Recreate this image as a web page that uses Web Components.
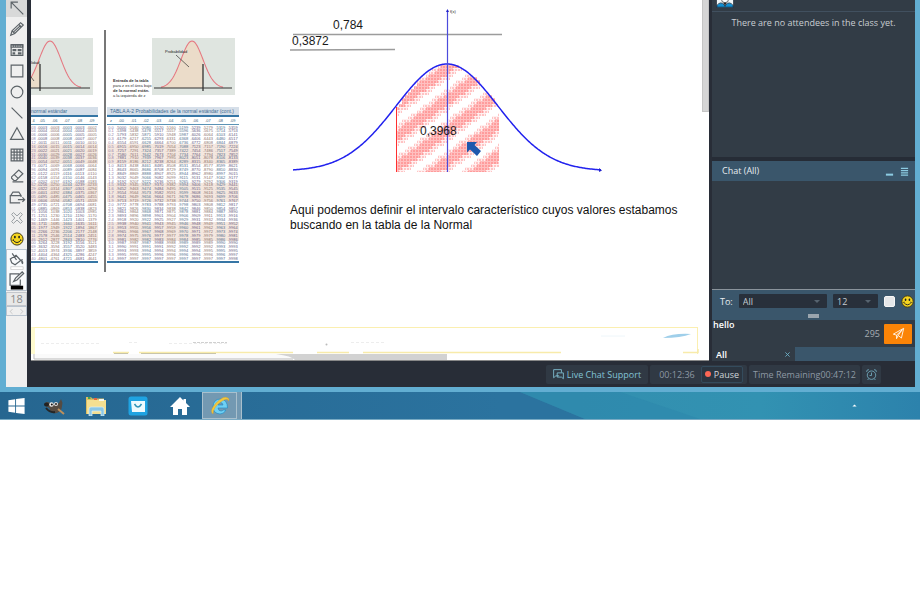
<!DOCTYPE html>
<html lang="es">
<head>
<meta charset="utf-8">
<title>Clase virtual</title>
<style>
html,body{margin:0;background:#fff}
body{font-family:"Open Sans","Noto Sans",sans-serif;font-size:11px}
</style>
</head>
<body>
<class-desktop></class-desktop>
<script>
const define=(name,html,setup)=>{
  const t=document.createElement('template');t.innerHTML=html;
  customElements.define(name,class extends HTMLElement{
    constructor(){super();this.attachShadow({mode:'open'}).append(t.content.cloneNode(true));}
    connectedCallback(){if(setup&&!this.ready){this.ready=true;setup.call(this,this.shadowRoot);}}
  });
};
const smiley='<circle cx="10" cy="10" r="8.7" fill="#f6d51f" stroke="#3d3510" stroke-width="1.4"/><ellipse cx="7" cy="7.3" rx="1.3" ry="2" fill="#222"/><ellipse cx="13" cy="7.3" rx="1.3" ry="2" fill="#222"/><path d="M4.3 11.3q5.7 7.6 11.4 0M3.6 11.8l1.6-1M16.4 11.8l-1.6-1" fill="none" stroke="#222" stroke-width="1.4"/>';
const S='fill="none" stroke="currentColor" stroke-width="1.3"';
const ICONS={
 arrow:`<path d="M17 17L4 4M3.5 10.500V3.500H11" ${S}/>`,
 pencil:`<path d="M3 17l1.500-5L14 3l3 2.500-9.500 9.500zM12 5l3 2.800M4.500 12l3 3M6 13.500l8-7.500" ${S}/>`,
 panel:`<path d="M3.500 4h13v12h-13z" ${S}/><path d="M3 4h14v3.500H3zM5 9h4.300v2.500H5zM10.700 9H15v2.500h-4.300zM5 12.500h3V15H5zM11 12.500h4V15h-4z" fill="currentColor"/><path d="M4 5.700h12" stroke="#eee" stroke-width=".8" stroke-dasharray="1.500 1"/>`,
 square:`<path d="M3.500 3.500h13v13h-13z" ${S}/>`,
 circle:`<circle cx="10" cy="10" r="6.500" ${S}/>`,
 line:`<path d="M4 4l12 12" ${S}/>`,
 triangle:`<path d="M10 3l7.200 13H2.800z" ${S}/>`,
 grid:`<path d="M3.500 3.500h13v13h-13zM6.800 3.500v13M10 3.500v13M13.300 3.500v13M3.500 6.800h13M3.500 10h13M3.500 13.300h13" ${S}/>`,
 eraser:`<path d="M4 11l8-7.500 4.500 4L9 15H6.500L4 12.500zM7 8.500l4.500 4.500M5 16.500h12" ${S}/>`,
 shape:`<path d="M14.500 10V8.500h-12v8h11M3 8.500l2.500-4h6.500l2.500 4M11 13h7.500M16 10.500l2.500 2.500L16 15.500" ${S}/>`,
 cross:`<path d="M4 6l2-2 4 3.700L14 4l2 2-3.500 4 3.500 4-2 2-4-3.700L6 16l-2-2 3.500-4z" fill="none" stroke="#9aa0a4" stroke-width="1.100"/>`,
 smiley,
 bucket:`<path d="M3.500 8.500l6-4 5 5.500-6 4.500-3.500-2zM5.500 2.500l4.500 7M14.500 10l2-1" ${S}/><path d="M15 9q3.500 3 1.500 5-2-.500-1.500-5" fill="currentColor"/><path d="M4 16.500h13v3H4z" fill="#fff" stroke="#bbb" stroke-width=".6"/>`,
 penbox:`<path d="M13 3H3.200v12H14V9M7 11l2-3.500L16 1l1.500 1.500-7 7z" ${S}/><path d="M4 15.500h13v4H4z" fill="#000"/>`,
 prev:`<path d="M13 3L6 10l7 7" ${S}/>`,
 next:`<path d="M7 3l7 7-7 7" ${S}/>`,
 send:`<path d="M2 11L18 2l-3.500 15-5-4L16 4l-9 8.500M2 11l5 1.500V18l2.500-5" fill="none" stroke="#fff" stroke-width="1.300"/>`,
 chat:`<path d="M11 12H6l-3.500 3V2.500h12V7M8 7.500h9.500v9L14.500 14H8z" ${S}/>`,
 clock:`<circle cx="10" cy="11" r="6.500" ${S}/><path d="M10 7V11.500H7M2.500 6Q2 2.500 6 2.500M17.500 6Q18 2.500 14 2.500M6 16L4 18.500M14 16l2 2.500" ${S}/>`,
 start:`<path d="M1 3.500l7.500-1v7H1zM9.500 2.300L19 1v8.500H9.500zM1 10.500h7.500v7l-7.500-1zM9.500 10.500H19V19l-9.500-1.300z" fill="#fff"/>`,
 gimp:`<path d="M1 7q2-2 5 0 6 2 9 0l2-4 1.500 4-1 6q-3 5-8 4-4-1-4-5L1 10z" fill="#554b42"/><path d="M14 13l6 5" stroke="#bb8f5c" stroke-width="2"/><path d="M2 12q4 5 9 4" stroke="#252525" stroke-width="2" fill="none"/><circle cx="7.500" cy="8.500" r="2.200" fill="#eee"/><circle cx="12" cy="8" r="2" fill="#ddd"/><circle cx="7.800" cy="8.500" r="1" fill="#111"/><circle cx="12" cy="8" r=".9" fill="#111"/><ellipse cx="2.500" cy="8.500" rx="2.500" ry="2" fill="#222"/>`,
 folder:`<path d="M0 1h5l1 1.500h12V18H0z" fill="#dcbd62"/><path d="M1 4h19v14H1z" fill="#f4df91"/><path d="M2 1h2.500v2H2z" fill="#43a651"/><path d="M8 2h3v2H8z" fill="#e06544"/><path d="M13 3h5v2h-5z" fill="#f7f7ef"/><path d="M3 20v-7q0-2 2-2h11q2 0 2 2v7h-3v-5H6v5z" fill="#8bc7e6" stroke="#d9f0fa" stroke-width=".7"/>`,
 store:`<rect x=".5" y=".5" width="19" height="19" rx="2.500" fill="#1fa3e2"/><path d="M3 5h14v11H4z" fill="#eefafe"/><path d="M6.500 8q3.500 6 7 0" fill="none" stroke="#3193b7" stroke-width="1.500"/>`,
 home:`<path d="M10 1l3.500 3.500V3H16v4l4 4h-3v8h-5v-6H8v6H3v-8H0z" fill="#fff"/>`,
 ie:`<path d="M16 14q-2 4-6 4-7-.500-7-7.500Q3.500 3 10.500 3q7 .500 7 9H8q.500 3 3 3 1.500 0 2-1zM8 9h5q-.500-2.500-2.500-2.500T8 9z" fill="#6fd0f4" stroke="#248dc4" stroke-width=".7"/><path d="M3 18Q-1 15 6 7q8-8 12-5 1.500 1 .500 3Q18 1.500 12 5 3 11 3 18" fill="#f3c83d" stroke="#d69f22" stroke-width=".4"/>`,
 people:`<path d="M1 0h18v18H1z" fill="#f2f6f8"/><circle cx="10" cy="9" r="4" fill="#fff" stroke="#333" stroke-width=".8"/><path d="M1 18v-2q4-5 8-1l1 2 1-2q4-4 8 1v2z" fill="#148fd1" stroke="#123" stroke-width=".8"/><path d="M8 13l2 3 2-3z" fill="#222"/>`,
 menu:`<path d="M2 3h16M2 8h16M2 13h16M2 18h16" stroke="#8ccbe2" stroke-width="2.600"/>`,
 minus:`<path d="M2 17h16" stroke="#8ccbe2" stroke-width="4.500"/>`,
 close:`<path d="M4 4l12 12M16 4L4 16" stroke="#6fb2c8" stroke-width="2.500"/>`,
 up:`<path d="M4 13l6-6 6 6z" fill="#fff"/>`
};
define('ui-icon','<style>:host{display:block;width:20px;height:20px;flex:none}svg{display:block;width:100%;height:100%}</style>',function(r){
  r.append(document.createRange().createContextualFragment(`<svg viewBox="0 0 20 20" aria-hidden="true">${ICONS[this.getAttribute('name')]}</svg>`));
});

define('tool-bar',`<style>
:host{display:flex;flex-direction:column;background:#efefef;color:#5c6368;width:21px;overflow:hidden}
button{border:0;padding:0;background:none;color:inherit;height:21px;display:flex;align-items:center;justify-content:center;font:inherit}
.on{height:17px;align-items:flex-end;background:#d8d9d9;margin-bottom:1px}
ui-icon{width:18px;height:18px}.s{width:14px;height:14px}
.fill{border:1px solid #b9c3ce;background:#f8fafc}.fill button{height:20px}.fill ui-icon{width:19px;height:19px}
output{border:1px solid #c4c7cc;margin-top:1px;height:12px;line-height:12px;text-align:center;font-size:11px;color:#8b8b8b;background:#e8e8e8}
.step{display:flex;border:1px solid #b9c3ce}.step button{flex:1;height:8px;color:#999}.step ui-icon{width:7px;height:7px}
</style>
<button class="on" aria-label="Select"><ui-icon name="arrow"></ui-icon></button>
<button aria-label="Pencil"><ui-icon name="pencil"></ui-icon></button>
<button aria-label="Panel"><ui-icon name="panel"></ui-icon></button>
<button aria-label="Square"><ui-icon name="square"></ui-icon></button>
<button aria-label="Circle"><ui-icon name="circle"></ui-icon></button>
<button aria-label="Line"><ui-icon name="line"></ui-icon></button>
<button aria-label="Triangle"><ui-icon name="triangle"></ui-icon></button>
<button aria-label="Grid"><ui-icon name="grid"></ui-icon></button>
<button aria-label="Eraser"><ui-icon name="eraser"></ui-icon></button>
<button aria-label="Shapes"><ui-icon name="shape"></ui-icon></button>
<button aria-label="Clear"><ui-icon name="cross"></ui-icon></button>
<button aria-label="Emoji"><ui-icon class="s" name="smiley"></ui-icon></button>
<div class="fill"><button aria-label="Fill"><ui-icon name="bucket"></ui-icon></button><button aria-label="Stroke"><ui-icon name="penbox"></ui-icon></button></div>
<output>18</output>
<div class="step"><button aria-label="Smaller"><ui-icon name="prev"></ui-icon></button><button aria-label="Larger"><ui-icon name="next"></ui-icon></button></div>`);

/* Cumulative standard normal distribution (Zelen & Severo). */
const phi=z=>{const a=Math.abs(z),t=1/(1+.2316419*a),p=Math.exp(-a*a/2)/2.50662827*t*(.31938153+t*(-.356563782+t*(1.781477937+t*(-1.821255978+t*1.330274429))));return z<0?p:1-p};
define('normal-table',`<style>
:host{display:block;width:132px;font:4px "Liberation Sans",sans-serif}
:host([part-one]){width:67px}
table{width:100%;border-collapse:collapse;table-layout:fixed;height:146px;border-bottom:2px solid #3676a5}
caption{background:#d6dfe9;color:#3c6b92;height:8px;line-height:8px;font-size:5px;text-align:left;padding-left:3px;border-bottom:2px solid #3676a5;white-space:nowrap}
:host([part-one]) caption{padding-left:0}
td,th{padding:0;font-weight:400;line-height:3px;text-align:center;white-space:nowrap}
thead th{height:7px;border-bottom:1px solid #5b93b5;color:#3c5f7c}
th:first-child{width:8px}:host([part-one]) th:first-child{width:5px}
tbody th{color:#927ba8}
td:nth-child(3n){color:#8a6f6a}td:nth-child(3n+1){color:#4f6d8c}td:nth-child(3n+2){color:#64597e}
tr.b{background:#f4e7df}
</style><table><caption></caption><thead><tr></tr></thead><tbody></tbody></table>`,function(r){
  /* Part one starts at column .05; its narrow first column holds two digits only. */
  const neg=this.hasAttribute('part-one'),from=neg?5:0;
  r.querySelector('caption').textContent=neg?'normal estándar':'TABLA A-2 Probabilidades de la normal estándar (cont.)';
  let h=neg?'<th>4</th>':'<th>z</th>';for(let j=from;j<10;j++)h+=`<th>.0${j}</th>`;
  r.querySelector('thead tr').innerHTML=h;
  let b='';
  for(let i=0;i<35;i++){
    const z=neg?-3.4+i/10:i/10;
    b+=`<tr class="${Math.floor(i/5)%2?'b':''}"><th>${neg?phi(z-.04).toFixed(4).slice(4):z.toFixed(1)}</th>`;
    for(let j=from;j<10;j++)b+=`<td>${phi(neg?z-j/100:z+j/100).toFixed(4).slice(1)}</td>`;
    b+='</tr>';
  }
  r.querySelector('tbody').innerHTML=b;
});

const bell=(cx,base,h,s,from,to)=>{let d='';for(let x=from;x<=to;x++)d+=(d?'L':'M')+x+' '+(base-h*Math.exp(-((x-cx)**2)/(2*s*s))).toFixed(2);return d};

define('area-chart',`<style>:host{display:block;width:83px;height:57px;background:#dfe5e0}svg{display:block;overflow:hidden}</style>`,function(r){
  const c=+this.getAttribute('cut'),left=c<40,d=bell(40,50,47,11,9,71);
  const f=bell(40,50,47,11,9,c);
  r.append(document.createRange().createContextualFragment(`<svg width="83" height="57" viewBox="0 0 83 57"><path d="${f}V50H9z" fill="#ebdcc9"/><path d="${d}" fill="none" stroke="#e57982" stroke-width="1.100"/><path d="M2 50H80" stroke="#333"/><path d="M${c} 26V53" stroke="#333" stroke-width="1.300"/><path d="${left?'M18 35L24 43':'M24 17L37 29'}" stroke="#333" stroke-width=".7"/><text x="${left?21:13}" y="${left?26:15}" font-size="4" font-family="Liberation Sans,sans-serif" fill="#222">${left?'lidad':'Probabilidad'}</text></svg>`));
});

define('bell-plot',`<style>:host{display:block}svg{display:block}text{font:12px "Liberation Sans",sans-serif;fill:#1a1a1a}</style>`,function(r){
  let core='',edge='';
  const period=31;
  for(let x=106;x<209;x+=3)for(let y=62;y<172;y+=3){
    const top=171-107*Math.exp(-((x-157)**2)/(2*51*51));
    if(y<top-1)continue;
    const w=Math.min(3,209-x),h=Math.min(3,172-y);
    const f=((y+(x-106)*.72-103)%period+period*2)%period, dist=Math.min(f,period-f);
    if(dist<6)core+=`M${x} ${y}h${w}v${h}h-${w}z`;
    else if(dist<11)edge+=`M${x} ${y}h${w}v${h}h-${w}z`;
  }
  r.append(document.createRange().createContextualFragment(`<svg width="330" height="180" viewBox="0 0 330 180">
  <defs><pattern id="dots" width="3" height="3" patternUnits="userSpaceOnUse"><path d="M0 0h3v3h-3z" fill="#fff0f0"/><path d="M0 0h2v2h-2z" fill="#ffc4c4"/></pattern>
  <pattern id="dense" width="3" height="3" patternUnits="userSpaceOnUse"><path d="M0 0h3v3h-3z" fill="#ffc0c0"/><path d="M0 0h2v2h-2z" fill="#ff9c9c"/></pattern></defs>
  <path d="${edge}" fill="url(#dots)"/><path d="${core}" fill="url(#dense)"/>
  <path d="M3 34.500H212M0 50L105 49.500" stroke="#9c9c9c" stroke-width="1.300"/>
  <path d="M106.500 107V172" stroke="#ff3030"/>
  <path d="${bell(157,171,107,51,3,311)}" fill="none" stroke="#2222ee" stroke-width="1.500"/>
  <path d="M157.500 10V172" stroke="#4b4bdc" stroke-width="1.200"/><path d="M156 12l1.500-3 1.500 3zM309 168l3 2.500-3 1.500z" fill="#2222cc"/>
  <text x="160" y="13" style="font-size:4px">f(x)</text>
  <text x="43" y="29">0,784</text><text x="2" y="45">0,3872</text><text x="130" y="135">0,3968</text>
  <path d="M177 142h10l-2.500 3 6.500 6-4 5-7-6.500-3 3z" fill="#1f58ad"/></svg>`));
});

define('white-board',`<style>
:host{display:block;position:relative;background:#fff;overflow:hidden;border-bottom:1px solid #888;box-sizing:border-box;font-family:"Liberation Sans",sans-serif}
:host>*{position:absolute}
.c1{left:-21px;top:38px}.c2{left:121px;top:38px}
.t1{left:0;top:107px}.t2{left:76px;top:107px}
.rule{left:73px;top:30px;width:2px;height:242px;background:#777}
.note{left:82px;top:78px;margin:0;font-size:4px;line-height:5px;color:#333;white-space:nowrap}
bell-plot{left:259px;top:0}
.text{left:259px;top:203px;margin:0;font-size:12px;line-height:15px;color:#111;white-space:nowrap}
.v{right:0;top:0;width:7px;height:112px;background:#d5d5d5;border:1px solid #c4c4c4;border-top:0;box-sizing:border-box}
.box{left:0;right:11px;top:327px;height:27px;border:1px solid #fbefb0;border-left:4px solid #fffbcf;border-bottom:0;box-sizing:border-box}
.base{left:0;bottom:0}
</style>
<area-chart class="c1" cut="30"></area-chart><area-chart class="c2" cut="51"></area-chart>
<p class="note"><b>Entrada de la tabla</b><br>para z es el área bajo<br><b>de la normal están.</b><br>a la izquierda de z</p>
<normal-table class="t1" part-one></normal-table><normal-table class="t2"></normal-table>
<div class="rule"></div><bell-plot></bell-plot>
<p class="text">Aqui podemos definir el intervalo característico cuyos valores estabamos<br>buscando en la tabla de la Normal</p>
<div class="v"></div><div class="box"></div>
<svg class="base" width="678" height="34" viewBox="0 0 678 34" aria-hidden="true">
<path d="M4 28H250L268 33H4z" fill="#fafafa"/><path d="M3 28v5H262" fill="none" stroke="#bbb"/>
<path d="M245 28H416v6H264q-3-4-19-6z" fill="#d2d2d2"/>
<path d="M83 27.500h14M110 27.500H185" stroke="#b9b9a8"/>
<path d="M82 26.500h16M108 26.500H262M286 26.500h32M332 26.500H530M652 26.500h15V23" fill="none" stroke="#f8ebaa" stroke-width="1.500"/>
<path d="M10 17.500h58M98 16.500h10M138 17.500h58M320 16.500h34" stroke="#ededed" stroke-dasharray="3 2"/><path d="M162 16.500h34" stroke="#d0d0d0" stroke-dasharray="3 1"/><circle cx="295.500" cy="18.500" r="1" fill="#bbb"/>
<path d="M632 12q10-5 28-4-10 4-28 4" fill="#9fcfea"/><path d="M570 10h24" stroke="#eef6fa"/>
</svg>`);

define('side-panel',`<style>
:host{display:flex;flex-direction:column;color:#d5dadf;background:#323c46;font-size:9px;min-width:0}
.head{height:11px;border-bottom:1px solid #41505f;padding-left:4px;overflow:hidden}.head ui-icon{width:18px;height:18px;margin-top:-9px}
.none{margin:0;padding:4px 0 0;line-height:14px;text-align:center;min-height:141px;flex:1;color:#c9ced2}
.title{display:flex;align-items:center;border-top:4px solid #262c36;background:#3a566b;height:20px;padding:0 6px 0 10px;gap:6px}
h2{flex:1;margin:0;font-size:9px;font-weight:400;line-height:14px;color:#e6ebef}
.title button{border:0;background:none;padding:0;display:flex}.title ui-icon{width:9px;height:9px}
.log{height:108px;border-bottom:1px solid #8a939b}
.bar{background:#3a566b}
.to{display:flex;align-items:center;gap:6px;height:22px;padding:0 1px 0 8px;color:#e8edf0}
select{appearance:none;border:0;border-radius:1px;margin:0;height:14px;line-height:14px;padding:0 4px;font:inherit;color:#c4cbd2;background:#28303b url("data:image/svg+xml,%3Csvg xmlns='http://www.w3.org/2000/svg' width='6' height='3'%3E%3Cpath d='M0 0h6L3 3z' fill='%2356636f'/%3E%3C/svg%3E") no-repeat right 7px center}
.who{flex:1;min-width:0}.size{width:45px}
input[type=checkbox]{appearance:none;width:11px;height:11px;margin:0;background:#e4e7e9;border-radius:2px;border:1px solid #f6f6f6}
.smile{border:0;background:none;padding:0}.smile ui-icon{width:13px;height:13px}
.grip{height:4px;width:11px;background:#9aa5ae;margin:2px auto}
.write{display:grid;grid-template-columns:1fr auto auto;align-items:center;gap:4px;padding:0 3px 0 1px;height:27px}
.write input{align-self:start;min-width:0;border:0;background:none;padding:0;margin:-3px 0 0;height:14px;color:#fff;font:600 9px "Open Sans",sans-serif}
.write span{color:#a6adb3}
.send{border:0;border-radius:1px;background:#fb8407;width:28px;height:20px;display:flex;align-items:center;justify-content:center;padding:0}.send ui-icon{width:13px;height:13px}
.tabs{background:#3a566b;height:14px;display:flex}
.tab{background:#323c46;width:75px;display:flex;align-items:center;justify-content:space-between;padding:0 4px;font-weight:600;color:#fff}
.tab button{border:0;background:none;padding:0}.tab ui-icon{width:7px;height:7px}
</style>
<div class="head"><ui-icon name="people"></ui-icon></div>
<p class="none">There are no attendees in the class yet.</p>
<div class="title"><h2>Chat (All)</h2><button aria-label="Minimise"><ui-icon name="minus"></ui-icon></button><button aria-label="Menu"><ui-icon name="menu"></ui-icon></button></div>
<div class="log"></div>
<div class="bar"><div class="to"><label for="who">To:</label><select id="who" class="who"><option>All</option></select><select class="size" aria-label="Size"><option>12</option></select><input type="checkbox" aria-label="Colour"><button class="smile" aria-label="Emoji"><ui-icon name="smiley"></ui-icon></button></div><div class="grip"></div></div>
<div class="write"><input value="hello" aria-label="Message"><span>295</span><button class="send" aria-label="Send"><ui-icon name="send"></ui-icon></button></div>
<div class="tabs"><div class="tab"><span>All</span><button aria-label="Close tab"><ui-icon name="close"></ui-icon></button></div></div>`);

define('status-bar',`<style>
:host{display:flex;justify-content:flex-end;align-items:center;gap:2px;height:26px;padding-right:34px;font-size:9px;color:#8d98a3;min-width:0}
.live,.time,.left,.clock{display:flex;align-items:center;height:19px;border-radius:2px;background:#303944;box-sizing:border-box;line-height:14px;color:inherit;font:inherit;border:0;text-decoration:none;white-space:nowrap}
.live{padding:0 7px 0 6px;gap:2px;color:#82c3d6}.live ui-icon{width:13px;height:13px}
.time{padding:0 4px 0 9px;gap:6px}
.pause{display:flex;align-items:center;gap:3px;height:17px;padding:0 3px;border:1px solid #344b5c;border-radius:2px;background:#2b3540;color:#d0d5da;font:inherit}
.pause i{width:6px;height:6px;border-radius:50%;background:#fb6755}
.left{padding:0 4px}.clock{padding:0 3px;color:#74aec2}.clock ui-icon{width:13px;height:13px}
</style>
<a class="live" href="#"><ui-icon name="chat"></ui-icon>Live Chat Support</a>
<div class="time">00:12:36<button class="pause"><i></i>Pause</button></div>
<div class="left">Time Remaining<span>00:47:12</span></div>
<button class="clock" aria-label="Alarm"><ui-icon name="clock"></ui-icon></button>`);

define('task-bar',`<style>
:host{display:flex;position:relative;background:linear-gradient(90deg,#266690,#2b739f 500px);height:28px;border-bottom:1px solid #79abc4;box-sizing:border-box}
.bg{position:absolute;inset:0;width:100%;height:100%}
button{position:relative;border:0;background:none;padding:0;width:42px;display:flex;align-items:center;justify-content:center}
.start{width:33px}ui-icon{width:22px;height:20px}.start ui-icon{width:19px;height:18px}
.active{width:35px;margin-left:1px;background:#7399b2;border:1px solid #a9c0cd}
.stack{position:relative;width:4px;background:#7399b2;border-right:1px solid #a9c0cd}
.tray{margin-left:auto;margin-right:56px;width:20px}.tray ui-icon{width:7px;height:7px}
</style>
<svg class="bg" viewBox="0 0 920 27" preserveAspectRatio="none" aria-hidden="true"><defs><linearGradient id="g"><stop offset="0" stop-color="#338eae"/><stop offset=".6" stop-color="#3292b2"/><stop offset="1" stop-color="#2c82ac"/></linearGradient></defs><path d="M520 0H920V27H585z" fill="url(#g)"/><path d="M520 0H620L700 27H585z" fill="#2b85ab" opacity=".5"/></svg>
<button class="start" aria-label="Start"><ui-icon name="start"></ui-icon></button>
<button aria-label="GIMP"><ui-icon name="gimp"></ui-icon></button>
<button aria-label="Files"><ui-icon name="folder"></ui-icon></button>
<button aria-label="Store"><ui-icon name="store"></ui-icon></button>
<button aria-label="Home"><ui-icon name="home"></ui-icon></button>
<button class="active" aria-label="Browser"><ui-icon name="ie"></ui-icon></button><div class="stack"></div>
<button class="tray" aria-label="Hidden icons"><ui-icon name="up"></ui-icon></button>`);

define('class-desktop',`<style>
:host{display:block}
.window{border:solid #62aed2;border-width:0 5px 5px 6px;background:#282d37;display:grid;grid-template-columns:21px minmax(0,1fr)}
.main{display:grid;grid-template-columns:minmax(0,1fr) 203px;gap:3px;padding-left:4px}
tool-bar{grid-row:span 2}
</style>
<div class="window"><tool-bar></tool-bar><div class="main"><white-board></white-board><side-panel></side-panel></div><status-bar></status-bar></div>
<task-bar></task-bar>`);
</script>
</body>
</html>
